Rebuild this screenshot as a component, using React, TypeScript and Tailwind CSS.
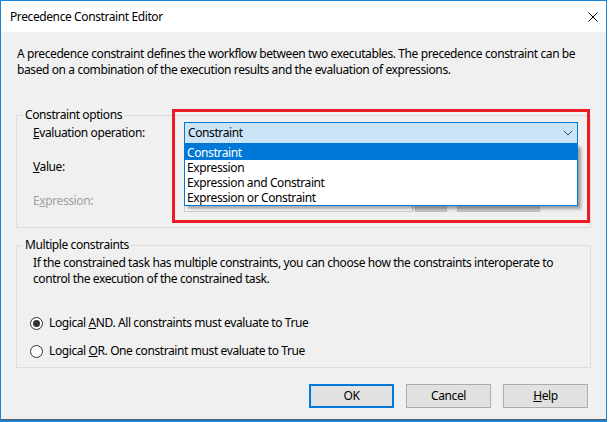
const items = ["Constraint", "Expression", "Expression and Constraint", "Expression or Constraint"];

function Chevron() {
  return (
    <svg width="10" height="6" viewBox="0 0 10 6" className="mr-[2px]">
      <path d="M1 1 L5 5 L9 1" fill="none" stroke="#444" strokeWidth="1" />
    </svg>
  );
}

function Radio({ checked }: { checked?: boolean }) {
  return (
    <span className="ml-[7px] flex h-[13px] w-[13px] shrink-0 items-center justify-center rounded-full border border-[#333333] bg-white">
      {checked && <span className="h-[7px] w-[7px] rounded-full bg-[#333333]" />}
    </span>
  );
}

export default function App() {
  return (
    <div className="h-[422px] w-[610px] bg-white font-['Noto_Sans',sans-serif] text-[12px] leading-[16px] tracking-[-0.4px] whitespace-nowrap text-black">
      <div className="relative flex h-[422px] w-[607px] flex-col border-x border-t border-b-2 border-[#1883d7]">
        {/* title bar */}
        <div className="flex h-[31px] shrink-0 items-center justify-between bg-white pl-[9px] pr-[8px]">
          <span>Precedence Constraint Editor</span>
          <svg width="10" height="10" viewBox="0 0 10 10">
            <path d="M0.5 0.5 L9.5 9.5 M9.5 0.5 L0.5 9.5" stroke="#000" strokeWidth="1" />
          </svg>
        </div>

        <div className="flex flex-1 flex-col border-b border-[#5a5a5a] bg-[#f0f0f0]">
          <p className="px-[16px] pt-[14px]">
            A precedence constraint defines the workflow between two executables. The precedence constraint can be
            <br />
            based on a combination of the execution results and the evaluation of expressions.
          </p>

          <fieldset className="ml-[15px] mt-[30px] w-[575px] border border-[#dcdcdc] px-[6px] pb-[15px]">
            <legend className="px-[2px] leading-[14px]">Constraint options</legend>
            <div className="flex flex-col gap-[12px] pl-[10px]">
              <div className="flex h-[22px] items-center">
                <span className="w-[151px]">
                  <u>E</u>valuation operation:
                </span>
                <div className="flex h-[22px] w-[394px] items-center justify-between border border-[#0078d7] bg-[#cce4f7] pl-[3px] pr-[2px]">
                  <span>Constraint</span>
                  <Chevron />
                </div>
              </div>
              <div className="flex h-[22px] items-center">
                <span className="w-[151px]">
                  <u>V</u>alue:
                </span>
                <div className="h-[22px] w-[394px] border border-[#7a7a7a] bg-white" />
              </div>
              <div className="flex h-[22px] items-center text-[#a0a0a0]">
                <span className="w-[151px]">
                  E<u>x</u>pression:
                </span>
                <div className="h-[22px] w-[229px] border border-[#cccccc] bg-white" />
                <div className="ml-[2px] h-[22px] w-[32px] border border-[#bfbfbf] bg-[#cccccc]" />
                <div className="ml-[10px] h-[22px] w-[83px] border border-[#bfbfbf] bg-[#cccccc]" />
              </div>
            </div>
          </fieldset>

          <fieldset className="ml-[15px] mt-[10px] w-[575px] border border-[#dcdcdc] px-[6px] pb-[8px]">
            <legend className="px-[2px] leading-[14px]">Multiple constraints</legend>
            <p className="pl-[10px] pt-[3px]">
              If the constrained task has multiple constraints, you can choose how the constraints interoperate to
              <br />
              control the execution of the constrained task.
            </p>
            <div className="mt-[28px] flex flex-col gap-[12px]">
              <label className="flex h-[16px] items-center">
                <Radio checked />
                <span className="ml-[6px]">
                  Logical <u>A</u>ND. All constraints must evaluate to True
                </span>
              </label>
              <label className="flex h-[16px] items-center">
                <Radio />
                <span className="ml-[6px]">
                  Logical <u>O</u>R. One constraint must evaluate to True
                </span>
              </label>
            </div>
          </fieldset>

          <div className="mt-[16px] flex justify-end gap-[12px] pr-[18px]">
            <button className="h-[24px] w-[85px] border-2 border-[#0078d7] bg-[#e1e1e1]">OK</button>
            <button className="h-[24px] w-[85px] border border-[#adadad] bg-[#e1e1e1]">Cancel</button>
            <button className="h-[24px] w-[85px] border border-[#adadad] bg-[#e1e1e1]">
              <u>H</u>elp
            </button>
          </div>
        </div>

        {/* open dropdown list */}
        <div className="absolute left-[183px] top-[143px] w-[394px] border border-[#0078d7] bg-white shadow-[3px_3px_3px_rgba(0,0,0,0.35)]">
          {items.map((item, i) => (
            <div
              key={item}
              className={i === 0 ? "h-[15px] bg-[#0078d7] pl-[2px] leading-[15px] text-white" : "h-[15px] pl-[2px] leading-[15px]"}
            >
              {item}
            </div>
          ))}
        </div>

        {/* annotation */}
        <div className="absolute left-[171px] top-[108px] h-[114px] w-[418px] border-[3px] border-[#ed1c24]" />
      </div>
    </div>
  );
}
